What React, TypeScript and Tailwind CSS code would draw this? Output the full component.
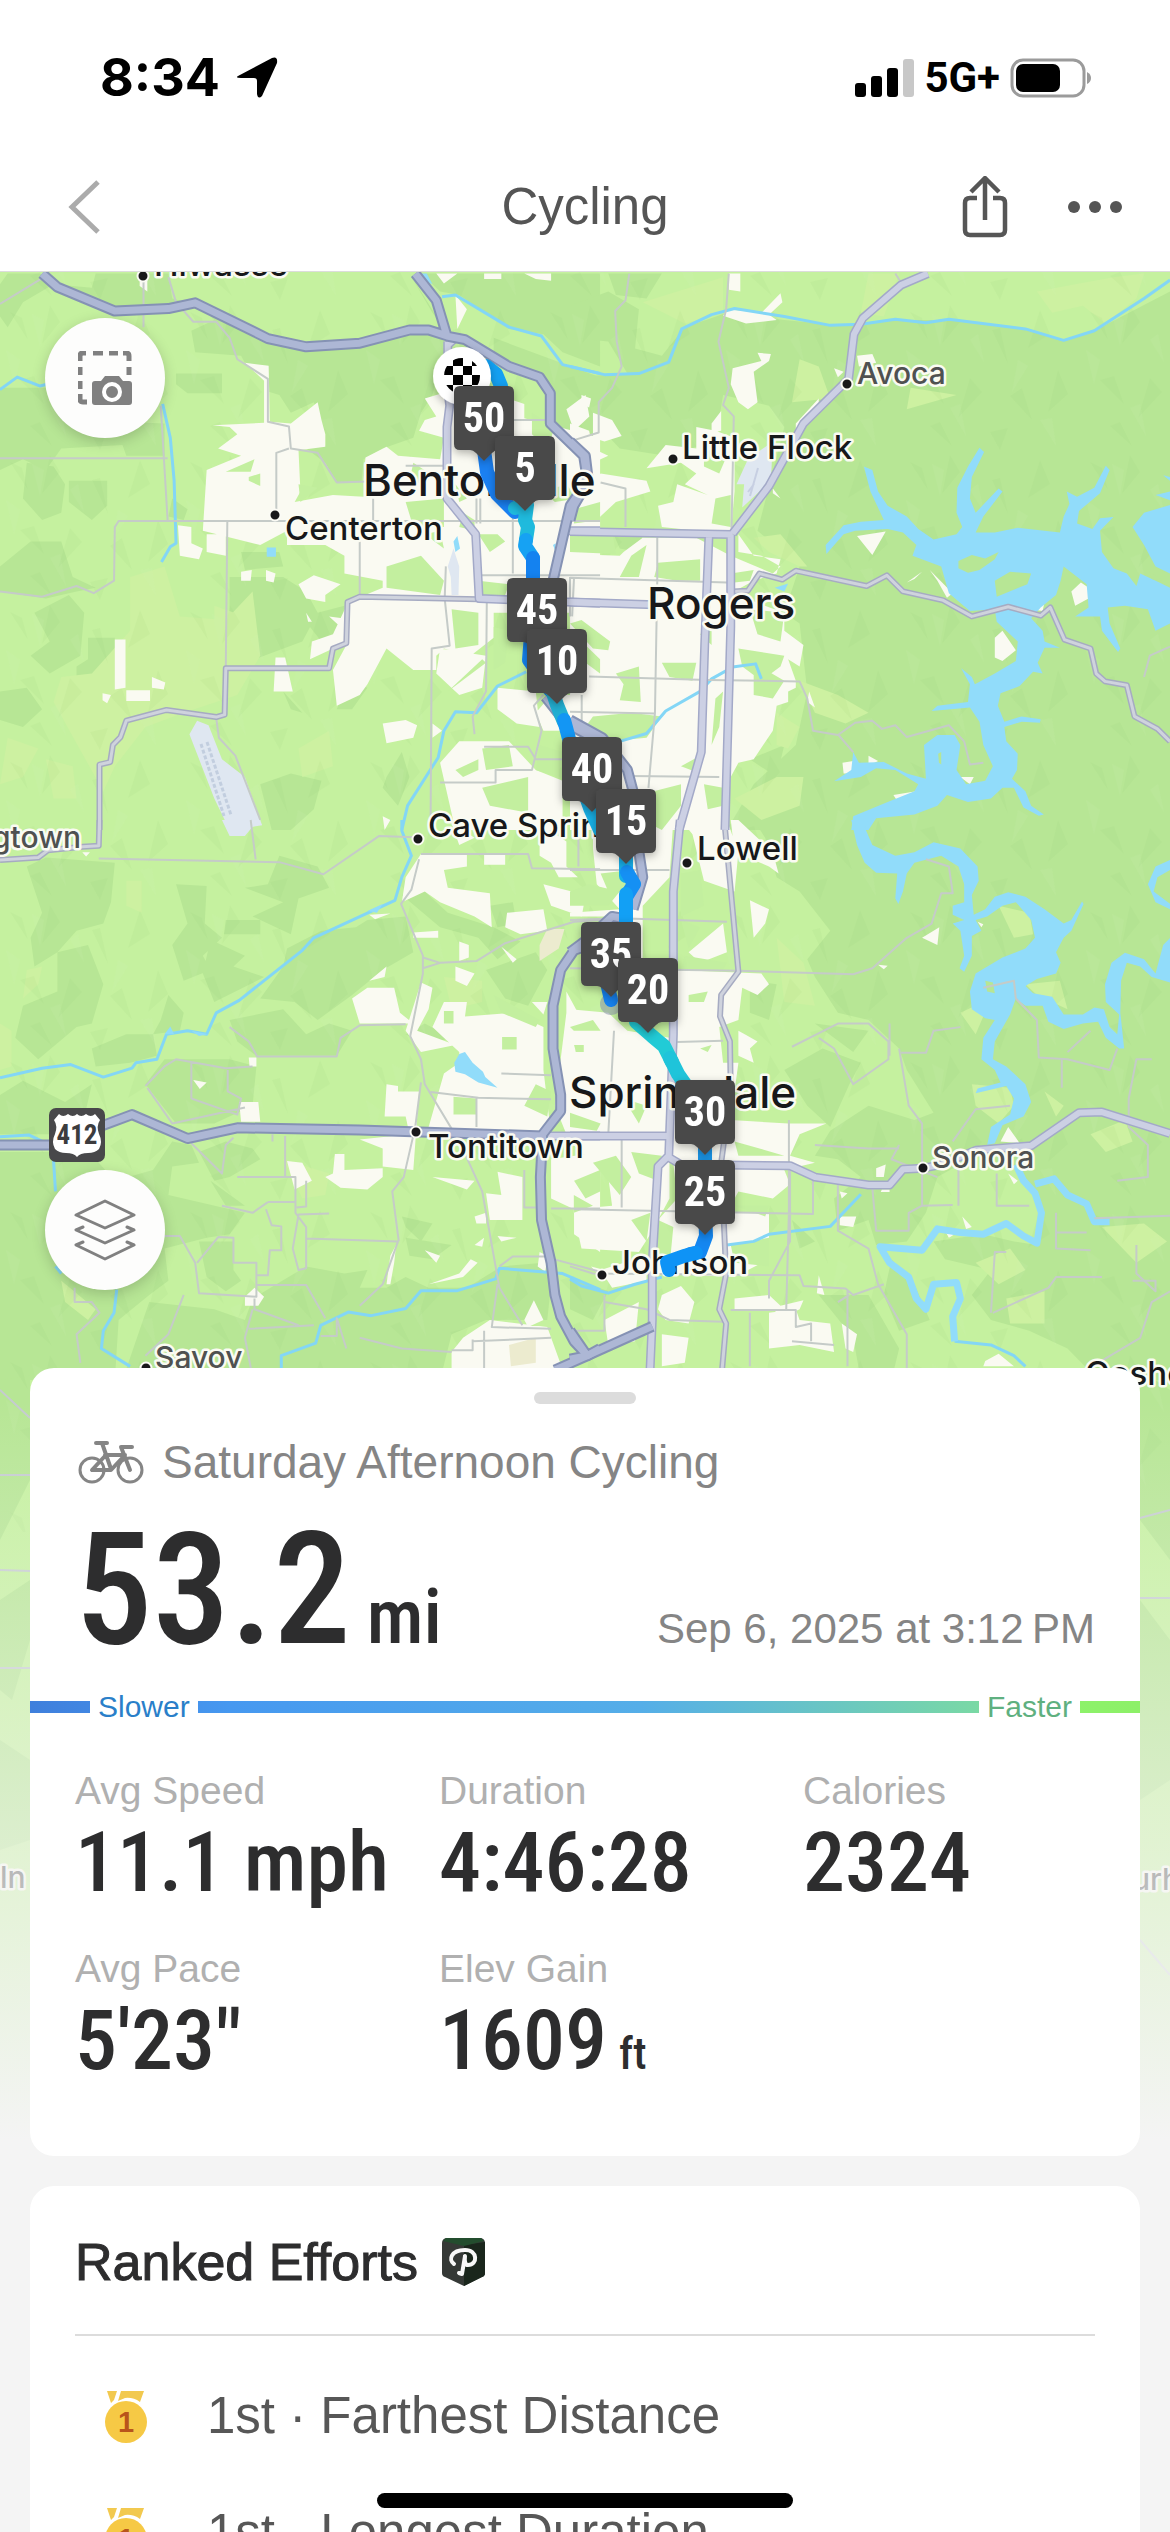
import type { ReactNode } from "react";

const SANS = "font-['Liberation_Sans',Arial,sans-serif]";
const NARROW = "font-['Roboto_Condensed','Liberation_Sans_Narrow',sans-serif]";

/* ---------- Map data ---------- */

// Every tile is drawn on its own 1568 x 1568 grid and then placed on the map.
interface Tile {
  id: string;
  transform: string;
  forest: string;
  meadow: string;
  town: string;
  park: string;
  airport?: string;
  lake?: string;
  islands?: string;
  sand?: string;
  streams: string;
  rivers?: string;
  lanes: string;
  roads: string;
  majors: string;
  highways: string;
}

const tiles: Tile[] = [
  {
    id: "north-west",
    transform: "translate(0 270) scale(.3827 .3571)",
    forest:
      "M20 10H105L150 55 300 120 440 110 510 90 700 190 800 220 940 205 1070 165 1170 180 1130 120 1070 10H250L240 50 140 40 60 90 20 160 0 130V40ZM440 10H1070L1170 180 1130 350 1100 400 1080 470 1000 500 950 530 945 590 880 595 850 540 800 500 850 490 850 460 820 370 760 400 730 350 700 340 700 300 640 260 630 240 510 230 500 170 560 140 520 100 450 80ZM1100 10H1568V270L1470 230 1420 180 1330 165 1200 70 1150 60ZM1290 190L1568 300V470L1520 520 1440 430 1440 320 1400 290 1290 250ZM0 330H120L200 420 430 430V520H330L320 490 160 500 120 560 60 530 0 560ZM460 290H580V345H490L460 320ZM70 540L140 550 170 600 160 680 110 700 60 640ZM180 590H280V660L240 700 180 650ZM80 760H160L190 860 250 890 200 900 120 920 0 900V830ZM90 960L180 910 220 960 210 1080 130 1130 80 1080 130 1040ZM230 1030H300V1080L280 1150 200 1170V1110L230 1090ZM0 1180L70 1170 110 1230 60 1280 0 1260ZM600 860H740L800 900 830 960 790 1040 640 1100 600 1090ZM630 790H730L740 830 640 840ZM680 1440L760 1410 840 1430 820 1510 760 1568H710ZM830 960L900 940 890 1010 840 1040 810 1000ZM880 1230L910 1150 960 1170 920 1230ZM1010 1420L1050 1350 1070 1420 1040 1500 1000 1450ZM1160 940L1250 960 1240 1040 1180 1060ZM740 1180L790 1240 760 1230ZM450 640L490 670 480 700 440 690Z",
    meadow:
      "M340 860L430 830 470 970 590 980 660 900 680 1080 620 1190 480 1240 380 1280 300 1390 270 1460 140 1210 160 1140 240 1130 340 1010ZM120 1370L190 1390 200 1480 140 1480ZM780 1340L860 1290 870 1390 790 1420ZM560 940L640 970 620 1040 560 1030ZM20 1310L100 1340 60 1420 0 1440Z",
    town:
      "M555 435L690 428 690 310 640 260 702 268 705 425 760 430 830 370 840 420 850 460 850 495 780 505 785 620 770 650 870 630 950 635 950 590 955 525 1010 495 1040 520 1150 530 1160 470 1095 450 1110 420 1140 410 1110 360 1170 340 1300 350 1370 375 1370 415 1568 470V1290L1420 1290 1400 1240 1440 1190 1568 1190V960H1290V1030L1230 1080 1160 1060 1140 1080 1140 1120 1080 1120 1010 1060 960 1160 940 1190 880 1220 870 1120 910 1040 810 1090 815 1040 870 1020 910 930 1000 890 1000 870 900 850 900 800 850 770 750 770 750 730 680 770 530 730 540 560 630 520 570 500 620 460 600 440ZM465 715L500 720 500 765 530 780 520 810 470 800ZM540 740H590V800L540 790ZM780 880L820 855 890 880 850 910 850 930 800 920ZM630 845L658 840 655 870 630 870ZM695 840L720 850 715 875 695 870ZM300 1035H328V1170L300 1175ZM330 1177H392V1207H330ZM397 1140L432 1155 428 1175 397 1170ZM268 1185L290 1190 280 1213 268 1205ZM720 1085H745L765 1180H715ZM1000 1270L1060 1260 1090 1275 1080 1310 1010 1325ZM1130 1270L1155 1290 1130 1310ZM1190 70L1220 110 1195 165ZM860 970L895 975 890 1000ZM800 960L815 985 805 985ZM1140 10H1195L1160 38ZM1265 10H1310V25H1265ZM1370 10H1440V30L1400 25ZM1150 1060L1270 1080 1260 1170 1200 1190 1140 1130ZM1300 1170L1400 1180 1410 1280 1350 1270 1300 1230ZM1200 1320H1330L1400 1400 1470 1430V1568H1190L1150 1380ZM1480 390L1530 350 1540 410 1500 450ZM365 10H385V60L365 45ZM1000 1530L1020 1540 1005 1568Z",
    park:
      "M590 565L665 530 655 565ZM650 580L680 570 680 605 650 590ZM780 600L830 610 785 650ZM1060 650L1160 640 1160 720 1080 720ZM1080 540L1130 575 1110 600 1070 590ZM1010 830L1100 800 1160 870 1150 910 1010 890ZM1110 740L1150 730 1160 780ZM1180 950L1250 960V1050L1190 1060ZM1290 1000L1330 1010 1320 1100 1290 1120ZM1250 870L1330 880 1320 910H1260ZM1170 1180L1270 1100 1260 1090ZM1250 740H1300L1320 760 1280 790ZM1210 680L1240 700 1240 730 1200 720ZM1420 620L1480 600 1510 640 1450 650ZM1260 1340L1330 1330 1340 1390 1270 1400ZM1190 1400L1250 1370 1250 1400 1210 1420ZM1260 1450L1380 1420 1380 1520 1280 1500ZM1520 1040L1568 1090V1130L1530 1100ZM1410 1330L1470 1350 1460 1420 1400 1400ZM1390 400L1450 440 1430 500 1390 460ZM1190 600L1220 640 1200 650ZM1500 670L1568 650V700L1500 710Z",
    airport:
      "M495 1300L515 1262 545 1275 580 1370 640 1420 685 1555 600 1568 560 1480ZM1170 830L1185 780 1200 830 1198 910H1180L1178 860Z",
    lake: "M697 777H721V803H697ZM1185 760L1195 745 1202 780 1190 790ZM1100 10H1115L1130 40 1110 30ZM1445 770L1452 765V790Z",
    streams:
      "M0 335L45 300 105 325 140 315M425 375L445 470 455 590 460 765 445 775 422 818M1155 75L1190 70 1330 160 1415 185 1470 265 1568 290M1050 1568L1065 1500 1145 1365 1160 1290 1190 1237 1245 1240 1300 1165 1375 1125",
    lanes:
      "M0 95L130 10M375 20V160M440 20L460 90 505 145 565 145 600 190 620 250 700 305V425L755 438 760 500 830 512 880 595 960 592M755 500L722 512V680M0 527H438M420 380L438 700M0 900L110 915 200 885 245 905 298 870 300 720 310 703H1568M594 705L590 1110M565 1255L572 1310 615 1360 680 1540M975 640V700M940 760V915M1245 640V710M1165 830L1162 920 1175 1052 1128 1060 1125 1568M1272 930L1270 1180 1235 1250 1240 1300M1265 1335H1380L1400 1370H1480M1150 1435H1295V1400H1390L1415 1290 1395 1220 1420 1190M1250 855H1568M1255 640V710M1340 640V850M1060 548H1170M1500 860L1495 970M1520 1190V1430M1320 420H1440",
    roads: "M260 1568V1385L288 1378 295 1330 315 1308 330 1262 435 1232 565 1252 587 1245 590 1115H860L870 1060 905 1045 908 930 940 915 1250 922",
    majors: "M1170 200V330L1175 380 1168 440V640L1243 740 1252 920 1568 933M1480 730H1568M1190 190L1170 210",
    highways:
      "M110 10L150 48 300 115 440 108 510 92 700 192 800 215 940 205 1070 168 1120 168 1170 185M1085 10L1140 85 1168 185 1215 195 1330 270 1410 300 1438 345V430L1525 520 1535 590 1490 660 1445 870M1425 1195L1480 1270 1568 1320",
  },
  {
    id: "north-east",
    transform: "translate(570 270) scale(.3827 .3571)",
    forest:
      "M0 100L100 60 180 110 170 220 240 240 300 160 410 120 560 140 700 155 850 140 1000 140 1180 165 1290 195 1370 170 1568 60V1568H410L480 1440 590 1330 620 1180 600 990 560 960 600 830 490 730 560 440 520 380 400 350 380 480 250 520 130 500 60 420 0 440V300L150 290 100 200 0 190ZM100 10H240L200 80 120 70ZM110 730L190 740 180 790 130 780ZM470 1370L560 1330 540 1420ZM0 1100L80 1060V1110Z",
    meadow:
      "M780 10H860L820 130 760 120ZM600 250L650 270 680 360 580 370ZM890 330L1010 350 880 390ZM1220 60L1320 40 1420 20 1500 10 1480 80 1400 150 1340 100 1260 120ZM600 1150L700 1190 780 1240 720 1270 640 1240ZM540 1240L600 1280 570 1340 540 1330ZM430 1480L540 1420 610 1420 600 1500 500 1540ZM480 750L550 740 620 830 600 830 520 790ZM190 90L400 20 400 120 300 150Z",
    town:
      "M415 10H445V60L415 55ZM410 110L500 120 550 65 555 90 520 125 540 140 460 150 400 128ZM490 232L525 235 520 255 480 285 490 370 465 390 440 370 420 320 425 275 500 255ZM30 350L55 360 50 385 30 375ZM60 400L110 420 135 465 90 480 60 470ZM0 430L50 450 60 500 100 520 60 540 0 510ZM370 430L395 395V450L370 455ZM330 440L380 450 430 470 430 620 420 740 240 720 230 660 270 650 280 600 360 630 300 600 330 570 290 540 200 555 250 490 330 500ZM590 430L650 360V390L590 450ZM80 570L200 590 210 620 120 650 50 720V610ZM0 795L130 800 140 790 190 750 330 750 420 800 530 850 550 830 500 800 440 790 440 740 480 800 550 810 540 850 480 870 420 905 560 960 560 1010 610 1050 600 1110 570 1090 590 1150 590 1170 570 1180V1210L540 1220 530 1290 480 1370 440 1380 420 1420 410 1568H0ZM750 745L825 732 790 798ZM940 840L1000 905 985 918 960 870ZM880 875L920 845 900 865ZM1250 800L1285 830 1280 850ZM1310 900L1335 875 1362 895 1355 920 1320 940ZM1205 950L1240 930 1235 955ZM1110 1085V1030L1130 1010 1165 1065 1130 1095ZM625 1180L640 1225 620 1210ZM845 1470L905 1460 905 1480 860 1495ZM1020 1420L1055 1420 1045 1440ZM712 1380L740 1375V1410H715ZM780 1360L805 1375 780 1388ZM750 240L790 235 800 260 755 270ZM530 612L550 640 530 625ZM690 275L715 285 700 300Z",
    park:
      "M0 990L30 980 105 1040 100 1065 60 1060ZM120 1130L180 1110 185 1210 130 1205 140 1160ZM240 1100L330 1100 320 1150 260 1140ZM60 1250L160 1240 240 1250 200 1310 100 1320 40 1280ZM380 1200L400 1180 390 1280 370 1330ZM440 1060L560 1080 550 1110 500 1150 450 1110ZM230 820L340 810 340 870 280 870 220 860ZM290 1390L340 1360 340 1410ZM180 1470L290 1440 290 1500 240 1568 190 1540ZM470 950L560 960 550 1040 490 1020ZM0 730H110L120 795 0 790ZM350 500L410 520 390 570 350 550ZM350 1440L400 1450V1500L360 1510ZM370 990L340 1020 370 1050ZM160 800L200 770 180 860 130 860ZM480 1100L560 1150 530 1200 480 1190ZM420 850L480 840 470 870 430 875ZM380 640L420 630V720L370 710Z",
    airport: "M465 530L530 480 525 590 450 665 455 600 435 600Z",
    lake:
      "M768 550L790 560 805 620 830 660 880 690 910 725 950 755 1010 740 1025 720 1010 680 1012 610 1040 550 1070 498 1082 510 1050 580 1045 640 1060 680 1120 612 1130 620 1080 690 1060 735 1110 735 1170 722 1280 735 1290 690 1305 655 1298 620 1325 635 1370 610 1400 548 1410 560 1385 625 1330 675 1325 710 1365 725 1385 695 1420 692 1385 730 1390 790 1420 835 1455 850 1480 885 1490 850 1540 875 1568 890V990L1530 1010 1510 950 1450 940 1405 945 1410 990 1438 1060 1432 1070 1390 1010 1385 970 1320 970 1355 945 1350 880 1290 830 1282 870 1270 910 1230 945 1205 975 1235 1010 1240 1040 1280 1058 1240 1058 1222 1100 1235 1130 1210 1125 1175 1165 1125 1185 1118 1220 1135 1265 1180 1250 1230 1258 1228 1268 1180 1265 1135 1280 1140 1320 1170 1355 1168 1400 1155 1425 1190 1460 1205 1500 1238 1525 1225 1528 1185 1505 1160 1450 1130 1450 1100 1480 1040 1490 985 1470 960 1500 900 1525 800 1535 780 1568H735L740 1530 830 1490 900 1460 910 1440 850 1400 800 1395 760 1420 690 1432 735 1400 740 1350 755 1380 820 1378 880 1410 930 1425 925 1330 960 1302 1005 1302 1020 1330 1010 1400 1035 1440 1085 1430 1105 1390 1080 1330 1070 1265 1045 1225 945 1235 960 1220 1040 1210 1045 1160 1022 1115 1050 1140 1058 1160 1110 1130 1165 1095 1170 1040 1115 985 1110 950 1045 955 990 905 970 830 895 800 905 770 870 735 830 725 745 730 715 740 670 795 668 770 715 715 760 705 820 700 785 620ZM1470 720L1500 680 1568 658V850L1530 830 1500 770ZM1530 630L1568 620V645ZM1550 575L1568 590V580ZM535 890L570 878 560 900Z",
    islands: "M1015 815L1050 798 1085 808 1120 790 1110 810 1070 840 1040 848 1015 835ZM1110 870L1150 845 1205 850 1195 880 1115 915ZM962 1355L970 1350V1385L964 1380ZM1515 845L1550 870 1520 865Z",
    streams:
      "M0 270L90 293 180 290 258 258 292 165 370 125 430 108 560 130 680 155 760 152 850 138 930 148 990 138 1190 165 1290 197 1370 170 1500 80 1568 28M130 1320L200 1298 250 1235 340 1180 370 1145 425 1112 485 1103 500 1145",
    lanes:
      "M155 10L145 85 118 115 122 200 135 270 110 330 75 370V455L0 480M415 10L408 110 388 200 415 330 400 378 428 410 422 730M80 595L145 612V720M0 862L410 875M0 860V970M50 1138L360 1148 600 1152 620 1200 635 1290 700 1302 745 1268 790 1262 815 1285 850 1275 880 1308 990 1275 1030 1320M228 740V870L222 1240 205 1450M0 1237L222 1242M160 1417L390 1420M850 10L865 35M740 1350L700 1300M1568 1055L1515 1080 1500 1140M1030 1320L1045 1385 1080 1380",
    roads: "M425 900L465 898 495 850 555 867 590 842 775 885 828 855 870 900 975 925 1050 970 1145 943 1230 968 1255 945 1292 1035 1360 1060 1375 1130 1398 1152 1455 1163 1475 1250 1535 1285 1568 1320",
    majors:
      "M935 10L865 42 765 135 742 180 728 305 610 430 520 605 425 738M0 732L425 741M363 745L352 1050 343 1350 285 1568M420 741V1000L405 1568M0 930L240 938",
    highways: "M0 480L40 520 48 590 10 660 0 700M0 1260L85 1310 150 1400 165 1460",
  },
  {
    id: "south-west",
    transform: "translate(0 820) scale(.3827 .3571)",
    forest:
      "M70 130L120 105 300 120 290 230 270 290 200 310 150 370 90 410 80 330 110 260ZM150 370L230 350 270 460 240 570 200 580 100 670 40 610 60 520 150 480ZM460 180L540 185 535 290 580 330 530 380 550 420 480 450 450 350 490 290ZM730 100L830 130 860 190 780 220 760 320 660 270 740 230 640 190 700 180ZM590 280H680V320H585ZM550 335L640 380 610 410 690 440 560 510 530 430ZM880 330L960 290 1000 360 930 400ZM840 310L930 300 960 280 1060 270 1080 370 1000 420 920 490 830 560 770 510 680 500 740 410 750 360ZM600 560L740 530 800 600 860 570 920 590 880 660H670L620 620ZM440 490L480 540 470 590 400 600 420 560ZM240 640L330 600 400 600 410 660 340 680 250 690ZM430 670L600 670 670 690 660 800 560 850 460 850 380 740ZM0 770L60 730 170 790 240 740 210 880 0 880ZM0 930H140L250 950 300 1010 400 980 450 900 500 910 520 960 450 970 440 1050 640 1100 600 1160 540 1170 430 1200 440 1290 390 1330 310 1400 300 1568H0ZM520 930L590 900 660 920 680 950 600 1000 560 1010ZM550 1010L640 1080 590 1080ZM520 1180L610 1180 610 1260 630 1290 590 1320 540 1280ZM660 1340L800 1250 900 1270 960 1260 940 1310 1010 1310 1060 1280 1120 1310 1220 1310 1310 1250 1420 1240 1440 1300 1430 1400 1270 1400 1180 1440 1150 1568H320L390 1350 560 1370 640 1400ZM1050 1110L1130 1130 1100 1180 1060 1140ZM1280 240L1340 230 1350 290 1300 300ZM1050 210L1110 200 1170 260 1290 300 1360 340 1300 390 1250 330 1150 300ZM1270 420L1400 370 1430 420 1380 520 1320 500ZM0 1120L50 1160 60 1240 0 1280ZM1060 1170L1180 1190 1130 1230 1070 1220ZM1180 610L1110 570 1060 600 1110 630Z",
    meadow: "M0 570L30 590V690L0 700ZM330 170H370V260L330 240ZM70 420L110 410 100 460 60 500ZM160 1290L250 1370 230 1400 170 1350ZM1160 440L1260 450 1260 510 1180 530ZM740 950L860 990 850 1050 790 1060Z",
    town:
      "M1100 95H1220V130L1160 140 1170 190 1280 205 1285 300 1240 270 1150 230 1110 200 1050 230 1060 160ZM1265 95H1320V125H1265ZM1410 10L1480 60 1480 130 1510 160 1460 160 1440 120 1410 100ZM1180 10L1240 50 1200 70ZM1420 180L1530 210 1520 270 1440 240ZM1325 260L1420 250 1430 310 1360 320 1320 300ZM1080 315L1145 310V330L1080 330ZM1200 340L1225 350V385L1200 395ZM1310 355L1350 390 1340 400ZM1190 410L1240 430 1220 465 1190 450ZM920 500L960 470 1030 470 1045 540 1080 570 940 570ZM965 450L1010 410 1005 440ZM1100 455L1130 470 1120 530 1090 590 1190 630 1100 650 1060 590ZM1160 510L1220 510 1215 550 1340 540 1420 580 1420 700 1440 880 1120 860 1160 710 1200 680 1200 650 1130 580ZM1010 740L1040 745 1040 760 1095 760 1080 980 1000 970V920L940 895 1070 880 1060 830 1005 830ZM1390 510L1430 510 1420 545ZM750 955L790 960 815 1010 770 1035ZM875 935H900V980L1000 975 1000 1000 960 1035 890 1030 850 1000 870 990ZM625 790H675L680 845H630ZM650 665H670V690H652ZM505 728L540 735 522 753ZM640 1335L665 1310 690 1335 675 1360 640 1360ZM1010 1300L1020 1220 1035 1190 1030 1240 1020 1300ZM1110 1205L1150 1220 1140 1240ZM1120 1300L1200 1270 1230 1230 1248 1240 1210 1280ZM1240 1190L1265 1170 1260 1195ZM1300 1165L1350 1170 1310 1180ZM1130 1000L1240 1010 1220 1035ZM1300 985L1365 1000V1120L1280 1120 1270 1045 1310 1050ZM1240 1110L1270 1100V1130H1245ZM1370 1400L1395 1345 1420 1400 1380 1420ZM1410 1210L1430 1220 1425 1265 1405 1250ZM1210 1450L1280 1400 1430 1420 1480 1568H1180V1490ZM1440 950L1568 930V1210L1500 1160V1090L1440 1060ZM1480 540H1568V880H1480L1450 800ZM1480 480L1510 540 1480 540ZM965 265L1020 262 980 278ZM215 90H235L225 102Z",
    park: "M1185 775L1245 780V825H1185ZM1312 608H1350V643H1312ZM1160 535H1185V570H1160ZM1290 490L1410 560 1400 580 1310 540ZM1400 740L1440 760 1430 830 1370 800ZM1500 630H1525V650H1505ZM1500 1010L1568 980V1040L1530 1060Z",
    airport: "M580 0H680L655 25 640 45 600 45Z",
    sand: "M1410 350L1430 305 1475 305 1460 360 1410 395ZM1330 1470L1400 1450V1520L1335 1530Z",
    lake: "M1187 680L1200 655 1215 650 1235 680 1262 705 1268 720 1300 750 1250 735 1215 712 1190 705ZM960 255L1000 235 985 260ZM430 600L445 578 455 600ZM500 590L545 600 520 605Z",
    streams:
      "M1050 0V30L1075 100 1050 160 1032 225 820 330 790 365 625 505 565 540 540 600 490 590 435 600 410 670 355 680 345 695 270 720 185 685 110 695 0 722M0 887L75 882 130 910M140 955L145 1040M145 1250L160 1270M305 1315L298 1380 270 1430 265 1480 340 1530M735 1568V1500L825 1465 838 1415 910 1378 970 1388 1060 1368 1100 1318 1195 1318 1295 1285 1305 1255 1470 1270 1568 1315",
    lanes:
      "M258 108L730 118 845 152 990 45 1085 48M655 0L668 110M1100 95H1380L1390 135 1568 138M1095 110L1075 195 1048 235 1105 380V430L1072 605 1100 670 1110 740 1200 900 1260 1040 1305 1310 1365 1415M1105 385L1150 400 1245 395 1320 345 1500 285 1568 280M1105 415L1150 400M600 580L650 620 672 662H880L890 610 940 575 1060 572M1100 735L1085 860 1055 1000 1025 1040 1042 1180M380 745L430 690 460 670 590 695 660 690M500 680V780L620 825 630 780 595 760V700M385 750L450 850 640 805M610 890L590 910 580 990 500 905M712 880V900M745 885V1000H620M745 1000H772V1100L800 1140V1255L780 1260 765 1200 780 1105 860 1102M800 1010V1082L775 1085M700 1070H770M700 1070L660 1100 580 1080M695 1090L710 1135 735 1138V1205H705L700 1275H672M800 1172L1040 1180 1000 1300 940 1360M430 1165H470L510 1240 520 1325 670 1335V1240H610V1170L570 1168 515 1240M672 1302H800L850 1395M195 1310V1350H240L260 1380 200 1440 210 1520M480 1330L440 1440 380 1500M660 1370L640 1450 660 1560M650 1425L820 1415M838 1445H880V1395L905 1480M1370 980V1085H1400M1125 762L1250 778 1440 782M1310 710L1440 715M1245 780V860M1300 1300L1285 1420 1440 1425M1265 1430V1560M1235 1460L1440 1450M1235 1455V1485H1180M1440 1088H1568M1305 1250L1340 1222H1420L1568 1265M940 1450L1050 1480 1180 1490M665 1340V1370L780 1415",
    roads: "M0 112L100 105 125 85 215 75 258 72 260 0",
    majors: "M1420 885H1568",
    highways: "M0 910H150L270 855 345 825 490 892 620 862 940 868 1420 885M1568 340L1500 365 1465 420 1445 520V640L1465 770V815L1418 880 1412 1000 1415 1120 1440 1240 1450 1330 1465 1390 1500 1460 1535 1500 1568 1480M1535 1500L1450 1540",
  },
  {
    id: "south-east",
    transform: "translate(570 820) scale(.3827 .3571)",
    forest:
      "M480 0H1568V1568H1380L1300 1480 1200 1430 1100 1400 1050 1330 1100 1260 980 1230 950 1180 1080 1160 1160 1180 1220 1190 1240 1100 1170 980 1060 940 960 1000 930 1100 880 1180 800 1190 780 1120 700 1150 690 1060 760 1000 700 950 640 940 680 870 780 800 900 840 950 820 880 700 860 640 780 560 700 540 640 440 620 390 680 310 600 200 540 160 510 50ZM560 700L660 640 760 680 730 740 680 860 620 800ZM640 570L780 590 740 650ZM840 1230L900 1300 940 1400 860 1430 820 1330ZM650 1330L780 1330 860 1480 840 1568H760L740 1450ZM580 1120L640 1180 600 1200ZM0 1280L100 1320 60 1400 0 1370ZM470 450L540 460 520 560 470 540Z",
    meadow:
      "M540 330L610 400 640 520 560 510ZM1050 740L1150 750 1160 800 1120 850 1060 800ZM1140 1340L1240 1320V1410H1150ZM1190 460L1280 450 1300 530 1220 490ZM1120 240L1200 260 1210 320 1160 330ZM1360 880L1450 840 1470 900 1400 930ZM1390 1140L1500 1130 1560 1180 1480 1240ZM1240 760L1290 800 1270 830ZM1020 540L1100 500 1060 600ZM1060 1240L1150 1200 1190 1260 1120 1300Z",
    town:
      "M60 0H270L260 160 190 240V410L100 270H0V260L130 250 70 180 60 80ZM290 0H410L440 90 430 200 350 170 320 40ZM420 0H440L530 90 545 150 520 130 430 90ZM470 225L520 250 510 290 480 330ZM310 370L400 290 410 370 340 400ZM0 530L100 540 150 590 260 610V1060L210 1160 180 1210 30 1200 10 1100V1090L110 1080 100 1000 0 900ZM280 420L500 430 520 460 490 490 450 470 440 560 390 580 400 680 440 680 420 840 570 850 670 850 600 880 575 940 640 960 560 980 575 1020 530 1060 440 1040 410 1100 520 1100 520 1230 430 1280 230 1270 230 1120 280 1060 260 860 240 700 280 640ZM440 590L490 620 470 640 480 680 440 660ZM240 1330L290 1305 325 1350 310 1410 250 1400 230 1370ZM240 1440L310 1450 300 1520 240 1530ZM430 1340L520 1330 550 1360 610 1345 600 1370 520 1410 540 1370 430 1370ZM520 1380L590 1370 600 1400 680 1410 690 1490 600 1470 520 1480ZM920 330L965 300 960 350ZM805 405L830 408 820 418ZM1090 430L1125 410 1130 425ZM1015 265L1030 245 1040 268ZM1065 285L1080 292 1075 300ZM1125 900L1145 860 1175 905ZM1145 990L1170 1010 1160 1020ZM800 975L825 965 820 1000 800 1000ZM815 1035H835V1042H812ZM705 1040L725 1045 710 1060ZM705 1110L748 1110 740 1140 705 1135ZM650 1275L665 1330 645 1325ZM1085 1515L1120 1495 1160 1530H1080ZM980 1150L1005 1160 990 1170ZM1025 1110L1050 1140 1035 1145ZM710 1410L750 1440 740 1490 720 1480ZM55 1250L90 1260 80 1280ZM80 1260L200 1220V1290L110 1310ZM90 1400L180 1350 170 1460 100 1470Z",
    park:
      "M0 200L50 180 130 200 100 240 0 240ZM80 150L160 140V200H100ZM0 580L60 560 80 590 10 590ZM15 630H35V650H15ZM0 820L80 850 70 870 0 860ZM340 640L370 630 360 650ZM60 960L120 940 160 1000 130 1050ZM10 1050L60 1080 10 1100ZM230 1120L270 1140 260 1250 230 1230ZM160 1120L210 1100 200 1180ZM430 900L560 940 440 940ZM290 280L340 300 310 360ZM300 380L410 400 400 420H290ZM160 930L240 940 230 1010 180 990ZM140 780L200 800 180 850ZM430 1080H520L510 1110ZM290 150L340 140 350 240 290 270ZM310 490L360 480 350 510 310 510ZM420 1190L520 1170 520 1250 430 1240Z",
    lake:
      "M735 0H780L770 20 790 70 850 100 900 90 950 62 1020 80 1065 130 1068 170 1050 210 1055 265 1085 250 1110 215 1145 202 1190 215 1240 250 1290 290 1310 280 1338 228 1342 235 1310 310 1290 330 1270 370 1282 400 1270 430 1220 445 1190 465 1210 485 1260 495 1290 545 1340 545 1370 525 1395 530 1410 580 1430 600 1435 545 1400 510 1398 460 1415 400 1450 372 1500 390 1530 430 1550 350 1568 330V455L1520 440 1490 410 1455 400 1440 450 1438 540 1448 640 1435 640 1400 610 1380 565 1340 570 1290 585 1250 565 1235 520 1190 520 1165 500 1150 545 1110 620 1105 670 1140 690 1190 740 1205 790 1185 830 1130 855 1110 905 1090 910 1100 860 1150 825 1160 780 1140 745 1060 765 1065 752 1125 735 1110 700 1075 670 1080 610 1110 560 1085 555 1050 530 1045 480 1060 430 1130 385 1190 360 1215 330 1205 280 1165 230 1130 240 1090 270 1060 280 1075 310 1050 325 1050 380 1030 425 1018 415 1030 380 1020 310 1000 290 1030 280 1000 265 1000 240 1030 230 1030 180 1015 130 970 100 900 120 880 150 870 200 858 235 850 220 855 150 800 148 770 120 750 70ZM1085 455L1105 460 1140 500 1095 530ZM1510 180L1530 130 1568 112V140L1535 160 1525 200 1568 235V250L1530 230ZM1170 430L1200 400 1260 390 1250 420 1200 430 1180 510 1165 480Z",
    islands: "M1085 450L1105 455 1110 485 1090 480Z",
    streams: "M0 1285L30 1305 100 1325 170 1300 240 1280M410 1190L480 1180 520 1160 680 1138 760 1048M1005 1460L1100 1470 1160 1500 1190 1530",
    rivers:
      "M1165 965L1185 1010 1215 1045 1232 1100 1220 1185 1185 1165 1140 1130 1080 1160 1020 1155 960 1145 920 1205 810 1195 835 1240 885 1280 905 1340 930 1370 950 1300 1010 1295 1020 1340 1000 1390 1005 1460M1215 1020L1265 1005 1300 1050 1350 1075 1370 1125 1410 1125",
    lanes:
      "M0 140H260M22 0V130M0 280L130 275 410 285M0 415L440 422 740 432 790 415 880 330 945 290 970 205 1000 205 990 130 930 110M580 635L700 570H780L832 620V670L740 740 690 640 650 610M860 640L885 800 920 850V1080L1000 1078M865 652H930L950 590 1020 580M835 570V660M280 622L400 618M115 590L100 880M135 890V1085M10 1090L635 1103V1005M572 840V1100L565 1370M575 980V1180L520 1290V1340M0 1250L60 1270 600 1275 610 1305 720 1312 740 1330 820 1300M640 910L780 920 860 920M790 1030L800 1150H885V1100L920 1080M700 1020V1150L780 1200 805 1300 880 1440V1568M1080 470L1160 450 1165 500 1220 560 1225 665 1300 670 1410 700 1430 640M1300 650L1360 590M1285 670V750M1520 670H1480L1460 780V860L1510 910V1000L1430 1010M1115 990V1080H1200M1015 950V1080M1270 1100V1200L1360 1205M1270 1155H1350M1100 1380L1110 1210H1140M1105 1380L1250 1310 1270 1280H1390M1568 1320L1520 1350 1490 1450 1380 1520M1470 1290H1530V1320L1480 1270V1190M1370 1115L1568 1108M0 1430H90V1330M90 1350L200 1370 260 1400 400 1405M420 1372H590V1420L630 1410V1460M470 1380V1530M580 1460L690 1470M725 1315V1530M730 1330L700 1350M1000 900L1060 810 1150 800M860 910L840 950 960 1000",
    roads: "M403 0L440 425 395 490 392 550 418 620 420 760 395 960 408 1270 390 1370 408 1410 395 1568",
    majors:
      "M288 0L270 200V600L258 940 230 970 215 1240 215 1400 208 1568M0 885H258M258 945L290 965 575 968 640 1000 780 1022H835L870 978 923 975 970 965 1060 925 1205 912 1330 820 1390 818 1568 878",
    highways: "M180 90L190 160 165 250M0 370L50 330 110 270 135 275M0 1510L45 1500 215 1418M0 1430L45 1500",
  },
];

interface Place {
  name: string;
  x: number;
  y: number;
  dot?: [number, number];
  kind?: "city" | "minor";
}

const places: Place[] = [
  { name: "Hiwasse", x: 154, y: 276, dot: [143, 276] },
  { name: "Avoca", x: 857, y: 384, dot: [847, 384], kind: "minor" },
  { name: "Little Flock", x: 682, y: 459, dot: [673, 459] },
  { name: "Bentonville", x: 363, y: 496, kind: "city" },
  { name: "Centerton", x: 285, y: 540, dot: [275, 515] },
  { name: "Rogers", x: 647, y: 619, kind: "city" },
  { name: "Cave Springs", x: 428, y: 837, dot: [418, 839] },
  { name: "gtown", x: -8, y: 848, kind: "minor" },
  { name: "Lowell", x: 697, y: 860, dot: [687, 863] },
  { name: "Springdale", x: 569, y: 1108, kind: "city" },
  { name: "Tontitown", x: 428, y: 1158, dot: [416, 1132] },
  { name: "Sonora", x: 932, y: 1168, dot: [923, 1168], kind: "minor" },
  { name: "Johnson", x: 612, y: 1274, dot: [602, 1275] },
  { name: "Savoy", x: 155, y: 1368, dot: [146, 1368], kind: "minor" },
  { name: "Goshen", x: 1085, y: 1385 },
  { name: "ln", x: 0, y: 1888, kind: "minor" },
  { name: "urh", x: 1132, y: 1890, kind: "minor" },
];

// Later markers sit on top of earlier ones.
const markers = [
  { mile: 50, x: 484, y: 386 },
  { mile: 5, x: 525, y: 436 },
  { mile: 45, x: 537, y: 578 },
  { mile: 10, x: 557, y: 629 },
  { mile: 40, x: 592, y: 737 },
  { mile: 15, x: 626, y: 789 },
  { mile: 35, x: 611, y: 922 },
  { mile: 20, x: 648, y: 958 },
  { mile: 30, x: 705, y: 1080 },
  { mile: 25, x: 705, y: 1160 },
];

const route = [
  { d: "M486 366L496 374 501 386 500 400", color: "#14a0f2" },
  { d: "M484 450L487 472 497 494 515 512", color: "#1a80f2" },
  { d: "M515 508L527 505 525 520 528 527 526 540", color: "#1fbadd" },
  { d: "M526 540L525 546 533 558", color: "#16a2f3" },
  { d: "M533 558L533 610 529 660 550 690", color: "#1482f0" },
  { d: "M552 690L557 705 564 722", color: "#22afd2" },
  { d: "M564 720L568 735 580 780", color: "#1396f4" },
  { d: "M580 780L590 808 600 830 626 850", color: "#18b0e6" },
  { d: "M626 850V876", color: "#17aee8" },
  { d: "M627 872L634 884 626 897", color: "#1590f4" },
  { d: "M626 894V935", color: "#12a0f5" },
  { d: "M622 935L604 970 611 1000", color: "#1682f0" },
  { d: "M636 1022L652 1036 664 1046 672 1062", color: "#21cbd6" },
  { d: "M670 1058L678 1074 685 1084 700 1110", color: "#1fc4da" },
  { d: "M705 1110V1190", color: "#1a98ec" },
  { d: "M705 1210L706 1236 700 1252 690 1254", color: "#1487f1" },
  { d: "M696 1253L684 1256 667 1262 669 1270", color: "#0e93f6" },
];

/* ---------- Map ---------- */

type TileShape = Exclude<keyof Tile, "id" | "transform">;

interface LayerProps {
  shape: TileShape;
  fill?: string;
  stroke?: string;
  width?: number;
}

const Layer = ({ shape, fill = "none", stroke, width }: LayerProps) => (
  <g fill={fill} stroke={stroke} strokeWidth={width} strokeLinejoin="round">
    {tiles.map((tile) =>
      tile[shape] ? (
        <path key={tile.id} d={tile[shape]} transform={tile.transform} vectorEffect="non-scaling-stroke" />
      ) : null,
    )}
  </g>
);

const labelStyles = {
  city: "font-medium text-[44px]",
  town: "font-medium text-[33px]",
  minor: "font-medium text-[30px]",
};

const PlaceLabel = ({ name, x, y, dot, kind }: Place) => (
  <g>
    {dot && <circle cx={dot[0]} cy={dot[1]} r="5.5" fill="#18181a" stroke="#fbfbf5" strokeWidth="2" />}
    <text
      x={x}
      y={y}
      fill={kind === "minor" ? "#4f5150" : "#17181a"}
      stroke="#fafbf2"
      strokeWidth="5"
      strokeLinejoin="round"
      paintOrder="stroke"
      className={labelStyles[kind ?? "town"]}
    >
      {name}
    </text>
  </g>
);

const MileMarker = ({ mile, x, y }: { mile: number; x: number; y: number }) => (
  <g transform={`translate(${x} ${y})`} filter="url(#marker-shadow)">
    <path
      d="M-24 0H24Q30 0 30 6V58Q30 64 24 64H14Q11 64 8 67L0 75 -8 67Q-11 64 -14 64H-24Q-30 64 -30 58V6Q-30 0 -24 0Z"
      fill="#4a4a4a"
    />
    <text y="46" textAnchor="middle" fill="#fff" className={`${NARROW} font-bold text-[42px]`}>
      {mile}
    </text>
  </g>
);

const RouteMap = () => (
  <svg
    viewBox="0 272 1170 2260"
    preserveAspectRatio="xMidYMin slice"
    role="img"
    aria-label="Route map"
    className="absolute inset-x-0 top-0 w-full h-[2260px] font-[Inter,sans-serif]"
  >
    <defs>
      <pattern id="hills" width="180" height="150" patternUnits="userSpaceOnUse">
        <path
          d="M10 12L28 40 22 18ZM50 5L42 44 60 22ZM92 30L108 64 100 28ZM140 10L128 48 150 34ZM20 80L44 104 34 76ZM70 78L58 118 82 92ZM110 96L132 120 122 88ZM158 70L148 112 168 94ZM30 126L52 146 40 122ZM90 132L100 150 108 128Z"
          fill="#8fc774"
          fillOpacity=".09"
        />
        <path
          d="M32 14L40 46 44 20ZM70 40L84 62 78 34ZM118 60L112 92 128 66ZM6 50L14 84 20 60ZM50 108L66 136 60 104ZM140 120L156 146 152 118Z"
          fill="#d2f5b4"
          fillOpacity=".12"
        />
      </pattern>
      <linearGradient id="fade" x1="0" y1="0" x2="0" y2="1">
        <stop offset="0" stopColor="#f4f4f4" stopOpacity="0" />
        <stop offset="1" stopColor="#f4f4f4" />
      </linearGradient>
      <filter id="marker-shadow" x="-40%" y="-40%" width="180%" height="180%">
        <feDropShadow dx="0" dy="3" stdDeviation="4" floodColor="#000" floodOpacity=".3" />
      </filter>
      <clipPath id="ball">
        <circle r="18" />
      </clipPath>
    </defs>

    {/* Land */}
    <rect y="272" width="1170" height="2260" fill="#c5f19f" />
    <Layer shape="forest" fill="#b7e695" />
    <path
      d="M0 1380L30 1375V1480L0 1540ZM0 1600L30 1580V1640L12 1700 0 1690ZM1140 1370L1170 1390V1560L1140 1520ZM1140 1600L1170 1640V1780L1140 1800ZM0 1740L30 1760V1840L0 1850Z"
      fill="#b7e695"
    />
    <Layer shape="meadow" fill="#cdf1a1" />
    <rect y="272" width="1170" height="1260" fill="url(#hills)" />
    <Layer shape="town" fill="#fafaf2" />
    <Layer shape="park" fill="#c3ef9f" />
    <Layer shape="sand" fill="#ecebcf" />
    <Layer shape="airport" fill="#dfe7f1" />

    {/* Water */}
    <Layer shape="streams" stroke="#83d6f6" width={3} />
    <Layer shape="rivers" stroke="#91dcfa" width={7} />
    <Layer shape="lake" fill="#91dcfa" />
    <Layer shape="islands" fill="#b7e695" />

    {/* Roads */}
    <Layer shape="lanes" stroke="#c5cbc8" width={2} />
    <path d="M0 1390L30 1418M0 1475H30M0 1570L30 1571M1140 1518L1170 1510M1140 1598H1170M0 1668H30M1140 1940L1170 1975" fill="none" stroke="#c5cbd0" strokeWidth="2" />
    <Layer shape="roads" stroke="#a6abc2" width={6} />
    <Layer shape="roads" stroke="#cfd3dd" width={3} />
    <Layer shape="majors" stroke="#a3a9c8" width={9} />
    <Layer shape="majors" stroke="#ccd0e4" width={6} />
    <Layer shape="highways" stroke="#8592b4" width={11} />
    <Layer shape="highways" stroke="#adb7d5" width={7} />
    <path d="M201 744L224 816M207 742L231 815" fill="none" stroke="#c2cedf" strokeWidth="3" strokeDasharray="4 2" />
    <path d="M758 468L750 496M754 484L748 492" fill="none" stroke="#c7cfe2" strokeWidth="2" />

    {places.map((place) => (
      <PlaceLabel key={place.name} {...place} />
    ))}

    {/* US 412 shield */}
    <rect x="49" y="1108" width="56" height="54" rx="7" fill="#48484a" />
    <path
      d="M59 1114Q63 1118 68 1114Q73 1118 77 1114Q81 1118 86 1114Q91 1118 95 1114L100 1120Q96 1126 99 1134Q103 1142 99 1149Q95 1153 88 1153Q80 1153 77 1157Q74 1153 66 1153Q59 1153 55 1149Q51 1142 55 1134Q58 1126 54 1120Z"
      fill="#fff"
    />
    <text x="77" y="1144" textAnchor="middle" fill="#3c3c3e" className={`${NARROW} font-bold text-[27px]`}>
      412
    </text>

    {/* Route */}
    <circle cx="611" cy="1004" r="11" fill="#8f9aab" fillOpacity=".6" />
    <g fill="none" strokeWidth="14" strokeLinecap="round" strokeLinejoin="round">
      {route.map(({ d, color }) => (
        <path key={d} d={d} stroke={color} />
      ))}
    </g>

    <g transform="translate(462 376)">
      <circle r="29" fill="#fff" filter="url(#marker-shadow)" />
      <g clipPath="url(#ball)">
        <path
          d="M-9 -18H1V-10H-9ZM10 -18H18V-10H10ZM-18 -10H-9V-1H-18ZM1 -10H10V-1H1ZM-9 -1H1V9H-9ZM10 -1H18V9H10ZM-18 9H-9V18H-18ZM1 9H10V18H1Z"
          fill="#000"
        />
      </g>
    </g>
    {markers.map((marker) => (
      <MileMarker key={marker.mile} {...marker} />
    ))}

    <rect y="1400" width="1170" height="740" fill="url(#fade)" />
    <rect y="2139" width="1170" height="400" fill="#f4f4f4" />
  </svg>
);

/* ---------- Icons ---------- */

const BikeIcon = () => (
  <svg width="66" height="44" viewBox="0 0 66 44" fill="none" stroke="#858585" strokeWidth="4" strokeLinecap="round" strokeLinejoin="round" aria-hidden="true">
    <g strokeWidth="3">
      <circle cx="14" cy="30" r="12" />
      <circle cx="52" cy="30" r="12" />
    </g>
    <path d="M18 3H29M24 3L33 29M43 7H54M43 7L52 30M27 15H47M27 16L14 30H33L47 15" />
  </svg>
);

const MedalIcon = () => (
  <svg width="42" height="52" viewBox="0 0 42 52" aria-hidden="true">
    <path d="M2 0H12L9 9 6 12ZM16 0H39L35 11Q28 6 20 7L13 10Z" fill="#f2c94f" />
    <circle cx="21" cy="31" r="21" fill="#f6c945" />
    <text x="21" y="41" textAnchor="middle" fill="#b9541b" className={`${SANS} font-bold text-[29px]`}>
      1
    </text>
  </svg>
);

const BadgeIcon = () => (
  <svg width="43" height="48" viewBox="0 0 43 48" aria-hidden="true">
    <path d="M4 0H39Q43 1 43 5V35Q43 38 40 39L22 48 3 39Q0 38 0 35V5Q0 1 4 0Z" fill="#353936" />
    <path d="M22 7L43 4V35Q43 38 40 39L22 48Z" fill="#1a261c" />
    <path d="M4 0H39L42 3 22 8 1 3Z" fill="#234d2e" />
    <path d="M12 26C6 22 9 12 23 12C36 12 36 27 26 27Q22 27 23 18L20 36L17 35" fill="none" stroke="#f8f8f8" strokeWidth="4" strokeLinecap="round" strokeLinejoin="round" />
  </svg>
);

/* ---------- Page parts ---------- */

const StatusBar = () => (
  <div className="flex justify-between items-center pt-[34px] pr-[78px] pl-[100px] h-[122px] text-black">
    <div className="flex items-center gap-4">
      <span className="font-[Inter,sans-serif] font-bold text-[52px] leading-[60px]">8:34</span>
      <svg width="42" height="42" viewBox="0 0 42 42" aria-label="Location in use">
        <path d="M2 19L36 1Q42 -1 41 6L26 39Q22 43 21 37V24Q21 21 18 21H5Q-1 21 2 19Z" />
      </svg>
    </div>
    <div className="flex items-center gap-[10px]">
      <svg width="59" height="38" viewBox="0 0 59 38" aria-label="Signal strength">
        <rect y="24" width="11" height="14" rx="3" />
        <rect x="16" y="17" width="11" height="21" rx="3" />
        <rect x="32" y="9" width="11" height="29" rx="3" />
        <rect x="48" width="11" height="38" rx="3" fill="#c8c8c8" />
      </svg>
      <span className="font-[Roboto,sans-serif] font-bold text-[42px] leading-[48px]">5G+</span>
      <svg width="82" height="40" viewBox="0 0 82 40" aria-label="Battery">
        <rect x="2" y="2" width="72" height="36" rx="11" fill="none" stroke="#9b9b9b" strokeWidth="3" />
        <rect x="6" y="6" width="44" height="28" rx="7" />
        <path d="M77 14Q81 16 81 20T77 26Z" fill="#9b9b9b" />
      </svg>
    </div>
  </div>
);

const TitleBar = () => (
  <header className="grid grid-cols-3 items-center px-12 pt-5 border-[#dcdcdc] border-b h-[150px]">
    <button type="button" aria-label="Back" className="justify-self-start px-5 py-3">
      <svg width="32" height="54" viewBox="0 0 32 54" fill="none" stroke="#ababab" strokeWidth="5">
        <path d="M30 2L4 27 30 52" />
      </svg>
    </button>
    <h1 className="text-[#555] text-[51px] text-center leading-[60px]">Cycling</h1>
    <div className="flex justify-self-end items-center gap-[60px]">
      <button type="button" aria-label="Share">
        <svg width="46" height="62" viewBox="0 0 46 62" fill="none" stroke="#565656" strokeWidth="4.5" strokeLinejoin="round">
          <path d="M15 22H8Q3 22 3 27V54Q3 59 8 59H38Q43 59 43 54V27Q43 22 38 22H31" />
          <path d="M23 44V3M9 16L23 2 37 16" />
        </svg>
      </button>
      <button type="button" aria-label="More">
        <svg width="54" height="14" viewBox="0 0 54 14" fill="#555">
          <circle cx="6" cy="7" r="6" />
          <circle cx="27" cy="7" r="6" />
          <circle cx="48" cy="7" r="6" />
        </svg>
      </button>
    </div>
  </header>
);

const MapButton = ({ label, children }: { label: string; children: ReactNode }) => (
  <button
    type="button"
    aria-label={label}
    className="flex justify-center items-center bg-[#fdfdfc] shadow-[0_4px_14px_rgba(0,0,0,0.18)] rounded-full w-[120px] h-[120px]"
  >
    {children}
  </button>
);

const MapControls = () => (
  <div className="flex flex-col justify-between px-[45px] pt-[46px] pb-[78px] h-[1096px]">
    <MapButton label="Capture map">
      <svg width="54" height="54" viewBox="0 0 54 54" fill="none" stroke="#808080" strokeWidth="5">
        <path d="M2 10V5Q2 2 5 2H8M15 2H25M31 2H40M45 2H48Q51 2 51 5V10M2 16V24M2 30V38M2 43V48Q2 51 5 51H9M51 16V24" />
        <path d="M17 30H23L27 25H41L45 30H51Q54 30 54 33V51Q54 54 51 54H17Q14 54 14 51V33Q14 30 17 30Z" fill="#808080" stroke="none" />
        <circle cx="34" cy="41" r="8" fill="#808080" stroke="#fff" strokeWidth="4" />
      </svg>
    </MapButton>
    <MapButton label="Map layers">
      <svg width="62" height="62" viewBox="0 0 62 62" fill="none" stroke="#808080" strokeWidth="3" strokeLinecap="round" strokeLinejoin="round">
        <path d="M31 2L60 16 31 29 2 16ZM9 28L2 31 31 44 60 31 53 28M9 43L2 46 31 60 60 46 53 43" />
      </svg>
    </MapButton>
  </div>
);

const stats = [
  { label: "Avg Speed", value: "11.1 mph" },
  { label: "Duration", value: "4:46:28" },
  { label: "Calories", value: "2324" },
  { label: "Avg Pace", value: "5'23\"" },
  { label: "Elev Gain", value: "1609", unit: "ft" },
];

const SummaryCard = () => (
  <section className="bg-white pt-6 pb-[54px] rounded-3xl">
    {/* Drag handle */}
    <div className="bg-[#dcdcdc] mx-auto rounded-full w-[102px] h-3" />

    <div className="flex items-center gap-[18px] mt-8 px-12 text-[#858585]">
      <BikeIcon />
      <h2 className="text-[46px] leading-[52px]">Saturday Afternoon Cycling</h2>
    </div>

    <div className="flex justify-between items-baseline mt-3 px-[45px]">
      <p className={`${NARROW} font-medium text-[#2d2d2e] whitespace-nowrap`}>
        <span className="text-[155px] leading-[180px]">53.2</span>
        <span className="ml-4 text-[76px]">mi</span>
      </p>
      <p className="text-[#858585] text-[42px]">Sep 6, 2025 at 3:12{"\u202F"}PM</p>
    </div>

    {/* Pace legend */}
    <div className="flex justify-between mt-[9px] bg-[linear-gradient(90deg,#3f7fdc,#4698f0_18%,#55aee8_55%,#79d8a6_85%,#8df26a_93%,#8df068)] bg-no-repeat bg-center bg-size-[100%_12px] px-[60px] text-3xl leading-9">
      <span className="bg-white px-2 text-[#2a7fc9]">Slower</span>
      <span className="bg-white px-2 text-[#5fb080]">Faster</span>
    </div>

    <dl className="gap-x-[72px] gap-y-[34px] grid grid-cols-3 mt-[42px] px-[45px] whitespace-nowrap">
      {stats.map(({ label, value, unit }) => (
        <div key={label}>
          <dt className="text-[#b0b0b0] text-[39px] leading-[48px]">{label}</dt>
          <dd className={`${NARROW} font-medium text-[#2d2d2e] text-[84px] leading-[96px]`}>
            {value}
            {unit && <span className="ml-3 text-[44px]">{unit}</span>}
          </dd>
        </div>
      ))}
    </dl>
  </section>
);

const efforts = ["Farthest Distance", "Longest Duration"];

const RankedEfforts = () => (
  <section className="bg-white mt-[30px] px-[45px] pt-[46px] pb-10 rounded-3xl">
    <div className="flex items-center gap-6 pb-[42px] border-[#dcdcdc] border-b-2">
      <h2 className="text-[#2d2d2e] text-[52px] leading-[60px] [-webkit-text-stroke:1px]">Ranked Efforts</h2>
      <BadgeIcon />
    </div>
    <ul className="mt-[22px]">
      {efforts.map((effort) => (
        <li key={effort} className="flex items-center gap-[60px] pl-[30px] h-[117px] text-[#575757] text-[51px]">
          <MedalIcon />
          1st · {effort}
        </li>
      ))}
    </ul>
  </section>
);

export default function App() {
  return (
    <div className={`${SANS} flex flex-col bg-white h-screen`}>
      <StatusBar />
      <TitleBar />
      <main className="relative flex-1 bg-[#f4f4f4] overflow-y-auto [scrollbar-width:none]">
        <RouteMap />
        <div className="relative">
          <MapControls />
          <div className="px-[30px]">
            <SummaryCard />
            <RankedEfforts />
          </div>
        </div>
      </main>
      {/* Home indicator */}
      <div className="bottom-6 left-1/2 fixed bg-black rounded-full w-[416px] h-[15px] -translate-x-1/2" />
    </div>
  );
}
